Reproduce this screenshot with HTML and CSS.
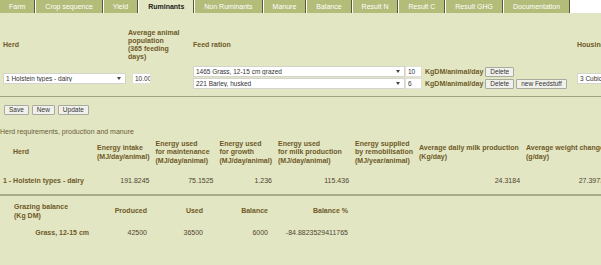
FILE: index.html
```html
<!DOCTYPE html>
<html lang="en">
<head>
    <meta charset="UTF-8">
    <meta name="viewport" content="width=device-width, initial-scale=1.0">
    <title>Ruminants</title>
    <link rel="stylesheet" href="styles.css">
</head>
<body>

    <div class="tabs">
        <a class="tab">Farm</a>
        <a class="tab">Crop sequence</a>
        <a class="tab">Yield</a>
        <a class="tab active">Ruminants</a>
        <a class="tab">Non Ruminants</a>
        <a class="tab">Manure</a>
        <a class="tab">Balance</a>
        <a class="tab">Result N</a>
        <a class="tab">Result C</a>
        <a class="tab">Result GHG</a>
        <a class="tab">Documentation</a>
    </div>

    <div class="page">
        <table class="herd-form">
            <colgroup>
                <col class="w-herd">
                <col class="w-pop">
                <col class="w-feed">
                <col class="w-house">
            </colgroup>
            <tr class="head">
                <th class="th-herd">Herd</th>
                <th>Average animal<br>population<br>(365 feeding<br>days)</th>
                <th>Feed ration</th>
                <th>Housing</th>
            </tr>
            <tr>
                <td>
                    <span class="select sel-herd"><select><option>1 Holstein types - dairy</option></select></span>
                </td>
                <td><input class="field pop" type="text" value="10.00"></td>
                <td>
                    <div class="feed-row">
                        <span class="select sel-feed"><select><option>1465 Grass, 12-15 cm grazed</option></select></span>
                        <input class="field amount" type="text" value="10">
                        <span class="unit">KgDM/animal/day</span>
                        <button class="btn">Delete</button>
                    </div>
                    <div class="feed-row">
                        <span class="select sel-feed"><select><option>221 Barley, husked</option></select></span>
                        <input class="field amount" type="text" value="6">
                        <span class="unit">KgDM/animal/day</span>
                        <button class="btn">Delete</button>
                        <button class="btn">new Feedstuff</button>
                    </div>
                </td>
                <td>
                    <span class="select sel-house"><select><option>3 Cubicle house</option></select></span>
                </td>
            </tr>
        </table>

        <div class="rule"></div>

        <div class="actions">
            <button class="btn">Save</button>
            <button class="btn">New</button>
            <button class="btn">Update</button>
        </div>

        <p class="section-title">Herd requirements, production and manure</p>

        <table class="results">
            <colgroup>
                <col style="width:94px">
                <col style="width:58px">
                <col style="width:64px">
                <col style="width:55px">
                <col style="width:77px">
                <col style="width:64px">
                <col style="width:107px">
                <col style="width:84px">
            </colgroup>
            <tr>
                <th class="th-herd">Herd</th>
                <th>Energy intake<br>(MJ/day/animal)</th>
                <th>Energy used<br>for maintenance<br>(MJ/day/animal)</th>
                <th>Energy used<br>for growth<br>(MJ/day/animal)</th>
                <th>Energy used<br>for milk production<br>(MJ/day/animal)</th>
                <th>Energy supplied<br>by remobilisation<br>(MJ/year/animal)</th>
                <th>Average daily milk production<br>(Kg/day)</th>
                <th>Average weight change<br>(g/day)</th>
            </tr>
            <tr class="data">
                <td class="label">1 - Holstein types - dairy</td>
                <td>191.8245</td>
                <td>75.1525</td>
                <td>1.236</td>
                <td>115.436</td>
                <td></td>
                <td>24.3184</td>
                <td>27.3973</td>
            </tr>
        </table>

        <div class="rule thick"></div>

        <table class="grazing">
            <colgroup>
                <col style="width:92px">
                <col style="width:58px">
                <col style="width:56px">
                <col style="width:65px">
                <col style="width:80px">
            </colgroup>
            <tr>
                <th class="th-label">Grazing balance<br>(Kg DM)</th>
                <th>Produced</th>
                <th>Used</th>
                <th>Balance</th>
                <th>Balance %</th>
            </tr>
            <tr class="data">
                <td class="label">Grass, 12-15 cm</td>
                <td>42500</td>
                <td>36500</td>
                <td>6000</td>
                <td>-84.8823529411765</td>
            </tr>
        </table>
    </div>

</body>
</html>
```

FILE: styles.css
```css
body {
    margin: 0;
    width: 601px;
    height: 265px;
    overflow: hidden;
    background-color: #e3e6c3;
    font-family: "Liberation Sans", Arial, sans-serif;
    font-size: 7px;
    color: #4f4530;
}

/* tab bar */
.tabs {
    display: flex;
    height: 13px;
    background: #ffffff;
}

.tab {
    margin-right: 1px;
    padding: 0 9px;
    line-height: 13px;
    background: #b3bd79;
    color: #ffffff;
    border-right: 1px solid #59593a;
    white-space: nowrap;
}

.tab.active {
    background: #e3e6c3;
    color: #222222;
    font-weight: bold;
}

.page {
    width: 650px;
}

/* herd form */
.herd-form {
    border-collapse: collapse;
    table-layout: fixed;
    width: 650px;
    margin-top: 13px;
}

.w-herd { width: 128px; }
.w-pop { width: 65px; }
.w-feed { width: 384px; }
.w-house { width: 73px; }

.herd-form th {
    height: 37px;
    padding: 0;
    text-align: left;
    vertical-align: middle;
    line-height: 8px;
    color: #6e5a28;
}

.herd-form .th-herd {
    padding-left: 3px;
}

.herd-form td {
    padding: 3px 0 0;
    vertical-align: middle;
}

.select {
    position: relative;
    display: inline-block;
    vertical-align: middle;
}

.select select {
    appearance: none;
    -webkit-appearance: none;
    display: block;
    width: 100%;
    height: 11px;
    margin: 0;
    padding: 0 0 0 2px;
    border: 1px solid #d4d4cc;
    background: #ffffff;
    font-family: "Liberation Sans", Arial, sans-serif;
    font-size: 6.5px;
    color: #333333;
}

.select::after {
    content: "";
    position: absolute;
    right: 5px;
    top: 4px;
    border-left: 2px solid transparent;
    border-right: 2px solid transparent;
    border-top: 3px solid #444444;
}

.sel-herd {
    width: 123px;
    margin-left: 3px;
}

.sel-feed {
    width: 212px;
}

.sel-house {
    width: 80px;
}

.field {
    height: 11px;
    box-sizing: border-box;
    margin: 0;
    padding: 0 0 0 2px;
    border: 1px solid #e0e0d8;
    background: #ffffff;
    font-family: "Liberation Sans", Arial, sans-serif;
    font-size: 6.5px;
    color: #333333;
    vertical-align: middle;
}

.pop {
    width: 19px;
    margin-left: 4px;
}

.feed-row {
    display: flex;
    align-items: center;
    height: 11px;
    margin-bottom: 1px;
}

.amount {
    width: 17px;
}

.unit {
    margin: 0 2px 0 3px;
    font-weight: bold;
    color: #6e5a28;
}

.btn {
    height: 10px;
    margin: 0 2px 0 0;
    padding: 0 4px;
    border: 1px solid #a9aaa0;
    border-radius: 1px;
    background: #f1f1ec;
    font-family: "Liberation Sans", Arial, sans-serif;
    font-size: 6.5px;
    line-height: 8px;
    color: #333333;
}

.rule {
    height: 0;
    margin-top: 6px;
    border-top: 1px solid #9ea47e;
}

.rule.thick {
    width: 601px;
    margin-top: 3px;
    border-top: 2px solid #a7ac8c;
}

.actions {
    display: flex;
    gap: 3px;
    padding: 8px 0 0 4px;
}

.actions .btn {
    margin: 0;
}

.section-title {
    margin: 13px 0 0;
    color: #6a5d38;
}

/* results tables */
.results, .grazing {
    border-collapse: collapse;
    table-layout: fixed;
}

.results {
    margin-top: 5px;
}

.results th, .grazing th {
    padding: 0 3px;
    text-align: left;
    vertical-align: middle;
    line-height: 8.4px;
    color: #6e5a28;
    white-space: nowrap;
}

.results .th-herd {
    padding-left: 13px;
}

.results td, .grazing td {
    padding: 0 3px;
    text-align: right;
    white-space: nowrap;
}

.results .data td {
    height: 22px;
    padding-top: 4px;
}

.results td.label {
    text-align: left;
    font-weight: bold;
    color: #6e5a28;
}

.grazing {
    margin-top: 7px;
}

.grazing th {
    text-align: right;
}

.grazing .th-label {
    padding-left: 14px;
    text-align: left;
}

.grazing .data td {
    height: 20px;
    padding-top: 2px;
}

.grazing td.label {
    font-weight: bold;
    color: #6e5a28;
}
```
